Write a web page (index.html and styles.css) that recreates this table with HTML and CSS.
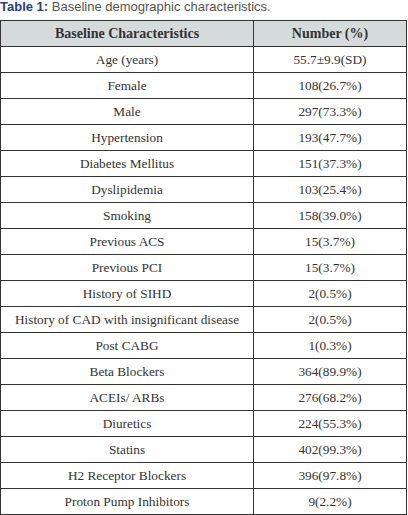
FILE: index.html
```html
<!DOCTYPE html>
<html lang="en">
<head>
  <meta charset="UTF-8" />
  <title>Table 1</title>
  <link rel="stylesheet" href="styles.css">
</head>
<body>
  <p class="caption"><b>Table 1:</b> Baseline demographic characteristics.</p>

  <table class="data">
    <thead>
      <tr><th>Baseline Characteristics</th><th>Number (%)</th></tr>
    </thead>
    <tbody>
      <tr><td>Age (years)</td><td>55.7±9.9(SD)</td></tr>
      <tr><td>Female</td><td>108(26.7%)</td></tr>
      <tr><td>Male</td><td>297(73.3%)</td></tr>
      <tr><td>Hypertension</td><td>193(47.7%)</td></tr>
      <tr><td>Diabetes Mellitus</td><td>151(37.3%)</td></tr>
      <tr><td>Dyslipidemia</td><td>103(25.4%)</td></tr>
      <tr><td>Smoking</td><td>158(39.0%)</td></tr>
      <tr><td>Previous ACS</td><td>15(3.7%)</td></tr>
      <tr><td>Previous PCI</td><td>15(3.7%)</td></tr>
      <tr><td>History of SIHD</td><td>2(0.5%)</td></tr>
      <tr><td>History of CAD with insignificant disease</td><td>2(0.5%)</td></tr>
      <tr><td>Post CABG</td><td>1(0.3%)</td></tr>
      <tr><td>Beta Blockers</td><td>364(89.9%)</td></tr>
      <tr><td>ACEIs/ ARBs</td><td>276(68.2%)</td></tr>
      <tr><td>Diuretics</td><td>224(55.3%)</td></tr>
      <tr><td>Statins</td><td>402(99.3%)</td></tr>
      <tr><td>H2 Receptor Blockers</td><td>396(97.8%)</td></tr>
      <tr><td>Proton Pump Inhibitors</td><td>9(2.2%)</td></tr>
    </tbody>
  </table>
</body>
</html>
```

FILE: styles.css
```css
body {
  margin: 0;
  padding: 0;
  background-color: #fff;
  font-family: 'Liberation Serif', serif;
}

.caption {
  margin: 0;
  height: 20px;
  line-height: 14px;
  font-family: 'Liberation Sans', Arial, sans-serif;
  font-size: 13px;
  color: #555;
}

.caption b {
  color: #2c3e78;
}

table.data {
  width: 407px;
  border-collapse: collapse;
  font-size: 13.3px;
  color: #333;
}

table.data th,
table.data td {
  height: 25px;
  padding: 0;
  border: 1px solid #333;
  text-align: center;
  vertical-align: middle;
}

table.data th {
  background-color: #d5dbdb;
  font-size: 14px;
  font-weight: bold;
}

table.data th:first-child,
table.data td:first-child {
  width: 252px;
}
```
